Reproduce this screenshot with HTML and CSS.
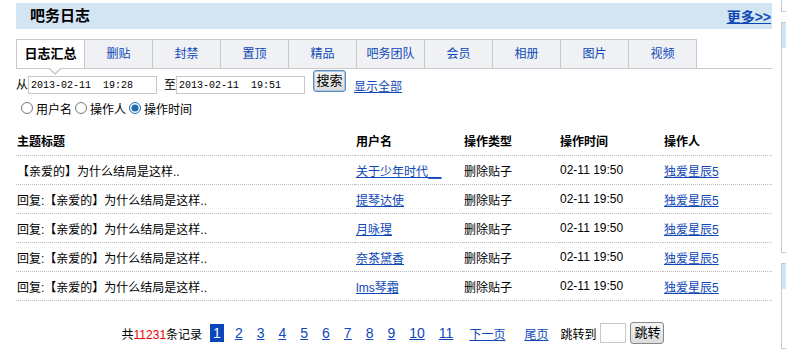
FILE: index.html
```html
<!DOCTYPE html>
<html lang="zh-CN">
<head>
<meta charset="UTF-8">
<title>吧务日志</title>
<link rel="stylesheet" href="styles.css">
</head>
<body>
<div class="page">
<div class="main">
<div class="head">
<h2>吧务日志</h2>
<a href="#" class="more">更多&gt;&gt;</a>
</div>

<ul class="tabs">
<li class="active">日志汇总</li>
<li><a href="#">删贴</a></li>
<li><a href="#">封禁</a></li>
<li><a href="#">置顶</a></li>
<li><a href="#">精品</a></li>
<li><a href="#">吧务团队</a></li>
<li><a href="#">会员</a></li>
<li><a href="#">相册</a></li>
<li><a href="#">图片</a></li>
<li><a href="#">视频</a></li>
</ul>

<form class="search">
<label>从</label><input type="text" class="date" value="2013-02-11  19:28">
<label class="to">至</label><input type="text" class="date" value="2013-02-11  19:51">
<button type="button" class="btn">搜索</button>
<a href="#" class="all">显示全部</a>
</form>

<div class="modes">
<label><input type="radio" name="mode">用户名</label>
<label><input type="radio" name="mode">操作人</label>
<label><input type="radio" name="mode" checked>操作时间</label>
</div>

<table class="log">
<thead>
<tr>
<th class="c-title">主题标题</th>
<th class="c-user">用户名</th>
<th class="c-type">操作类型</th>
<th class="c-time">操作时间</th>
<th>操作人</th>
</tr>
</thead>
<tbody>
<tr>
<td>【亲爱的】为什么结局是这样..</td>
<td><a href="#">关于少年时代__</a></td>
<td>删除贴子</td>
<td>02-11 19:50</td>
<td><a href="#">独爱星辰5</a></td>
</tr>
<tr>
<td>回复:【亲爱的】为什么结局是这样..</td>
<td><a href="#">提琴达使</a></td>
<td>删除贴子</td>
<td>02-11 19:50</td>
<td><a href="#">独爱星辰5</a></td>
</tr>
<tr>
<td>回复:【亲爱的】为什么结局是这样..</td>
<td><a href="#">月咏瑆</a></td>
<td>删除贴子</td>
<td>02-11 19:50</td>
<td><a href="#">独爱星辰5</a></td>
</tr>
<tr>
<td>回复:【亲爱的】为什么结局是这样..</td>
<td><a href="#">奈茶黛香</a></td>
<td>删除贴子</td>
<td>02-11 19:50</td>
<td><a href="#">独爱星辰5</a></td>
</tr>
<tr>
<td>回复:【亲爱的】为什么结局是这样..</td>
<td><a href="#">lms琴霜</a></td>
<td>删除贴子</td>
<td>02-11 19:50</td>
<td><a href="#">独爱星辰5</a></td>
</tr>
</tbody>
</table>

<div class="pager">
<span class="total">共<em>11231</em>条记录</span>
<span class="cur">1</span>
<a href="#">2</a>
<a href="#">3</a>
<a href="#">4</a>
<a href="#">5</a>
<a href="#">6</a>
<a href="#">7</a>
<a href="#">8</a>
<a href="#">9</a>
<a href="#">10</a>
<a href="#">11</a>
<a href="#" class="word">下一页</a>
<a href="#" class="word">尾页</a>
<span class="jump">跳转到</span><input type="text" class="page-no"><button type="button" class="btn go">跳转</button>
</div>
</div>

<!-- right column, mostly off screen -->
<div class="side">
<div class="box box-top"></div>
<div class="box box-mid"><div class="box-hd"></div></div>
<div class="box box-low"><div class="box-hd"></div></div>
</div>
</div>
</body>
</html>
```

FILE: styles.css
```css
html, body {
margin: 0;
overflow: hidden;
}

body {
font-family: "Liberation Sans", "Noto Sans CJK SC", sans-serif;
font-size: 12px;
color: #000;
background: #fff;
}

a {
color: #0e48b6;
}

.page {
display: flex;
align-items: flex-start;
width: 786px;
}

.main {
margin-left: 16px;
width: 756px;
flex-shrink: 0;
padding-top: 3px;
}

/* title bar */
.head {
display: flex;
align-items: center;
justify-content: space-between;
height: 26px;
background-color: #d3e4f3;
padding: 0 1px 0 14px;
}

.head h2 {
margin: 0;
font-size: 15px;
line-height: 26px;
}

.head .more {
font-size: 14px;
font-weight: bold;
line-height: 18px;
margin-top: 2px;
}

/* tabs */
.tabs {
display: flex;
list-style: none;
margin: 10px 0 0;
padding: 0;
border-bottom: 1px solid #c9c9c9;
}

.tabs li {
position: relative;
width: 67px;
height: 28px;
line-height: 28px;
text-align: center;
background-color: #eff1f4;
border: 1px solid #c9c9c9;
border-bottom: none;
margin-left: -1px;
}

.tabs li:first-child {
margin-left: 0;
}

.tabs li a {
text-decoration: none;
display: block;
}

.tabs li.active {
background-color: #fff;
font-weight: bold;
font-size: 13px;
}

.tabs li.active::before,
.tabs li.active::after {
content: "";
position: absolute;
left: 32px;
top: 29px;
border-style: solid;
border-color: transparent;
}

.tabs li.active::before {
border-width: 6px 6px 0;
border-top-color: #c9c9c9;
}

.tabs li.active::after {
left: 33px;
top: 28px;
border-width: 5px 5px 0;
border-top-color: #fff;
}

/* search form */
.search {
display: flex;
align-items: flex-end;
margin: 1px 0 0;
height: 23px;
}

.search label {
line-height: 16px;
}

.search .to {
margin-left: 7px;
}

.date {
box-sizing: border-box;
width: 129px;
height: 18px;
margin: 0 0 -1px;
padding: 1px 2px;
border: 1px solid #c8c8c8;
font-family: "Liberation Mono", monospace;
font-size: 10px;
color: #000;
}

.btn {
font-family: "Liberation Sans", "Noto Sans CJK SC", sans-serif;
font-size: 13px;
line-height: 16px;
color: #000;
white-space: nowrap;
background: linear-gradient(#f4f4f4, #dcdcdc);
border: 1px solid #5a8cc0;
border-radius: 3px;
box-shadow: inset 0 0 0 1px #a9c8e8;
padding: 0;
cursor: pointer;
}

.search .btn {
width: 33px;
height: 22px;
margin-left: 8px;
margin-bottom: 1px;
}

.search .all {
margin-left: 8px;
line-height: 16px;
margin-bottom: -2px;
}

/* radio options */
.modes {
display: flex;
margin-top: 6px;
height: 18px;
align-items: center;
}

.modes label {
display: flex;
align-items: center;
}

.modes input {
width: 12px;
height: 12px;
margin: 0 3px 0 5px;
accent-color: #1b6cb0;
}

.modes label + label input {
margin-left: 3px;
}

/* log table */
.log {
border-collapse: collapse;
width: 756px;
margin-top: 9px;
}

.log th, .log td {
text-align: left;
padding: 0 0 0 1px;
border-bottom: 1px dotted #bcbcbc;
white-space: nowrap;
}

.log th {
height: 29px;
vertical-align: middle;
}

.log td {
height: 28px;
}

.c-title {
width: 338px;
}

.c-user {
width: 107px;
}

.c-type {
width: 95px;
}

.c-time {
width: 103px;
}

/* pager */
.pager {
display: flex;
justify-content: center;
align-items: center;
margin-top: 21px;
height: 22px;
padding-right: 2px;
}

.pager .total em {
font-style: normal;
color: #e00;
}

.pager .cur {
background-color: #0b47b8;
color: #fff;
font-size: 14px;
line-height: 18px;
padding: 0 3px;
margin: 0 4px 0 8px;
}

.pager a {
font-size: 14px;
padding: 0 3px;
margin: 0 4px;
}

.pager a.word {
font-size: 12px;
margin: 0 7px 0 6px;
}

.pager .jump {
margin-left: 2px;
}

.page-no {
box-sizing: border-box;
width: 26px;
height: 20px;
margin: 0 4px;
border: 1px solid #c8c8c8;
}

.pager .go {
height: 22px;
width: 34px;
border-color: #888;
box-shadow: none;
}

/* right column */
.side {
margin-left: 9px;
flex: 1;
min-width: 0;
}

.box {
border: 1px solid #c8c8c8;
border-right: none;
}

.box-top {
height: 11px;
border-top: none;
}

.box-mid {
margin-top: 10px;
height: 229px;
}

.box-low {
margin-top: 10px;
height: 84px;
}

.box-hd {
height: 25px;
background-color: #d3e4f3;
}
```
